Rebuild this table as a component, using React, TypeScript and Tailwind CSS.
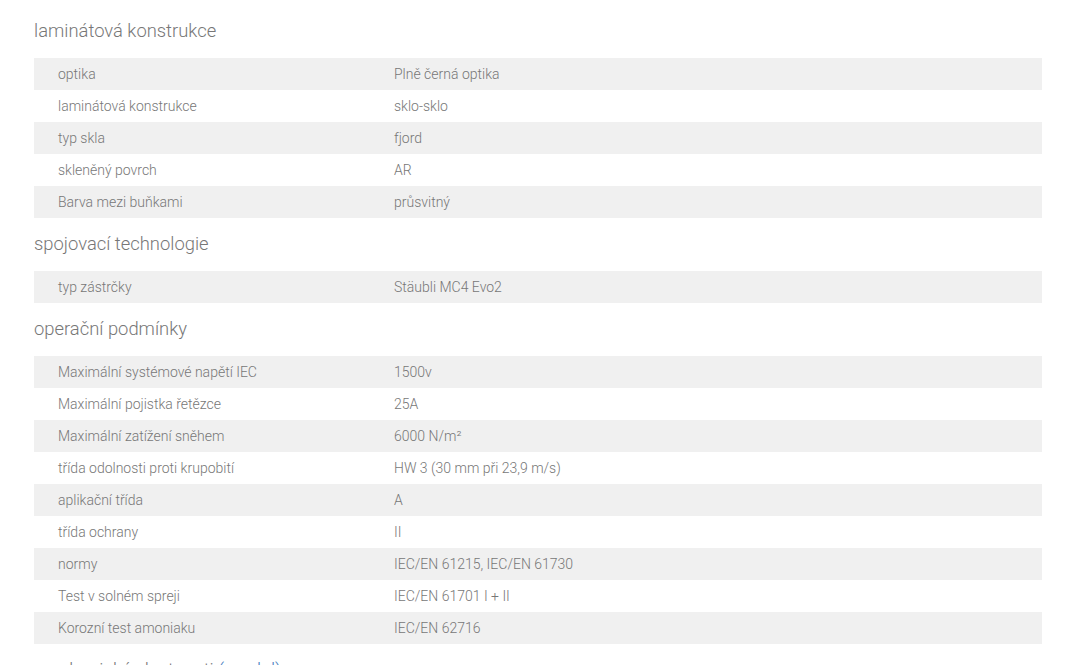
const SECTIONS: { title: string; rows: [string, string][] }[] = [
  {
    title: 'laminátová konstrukce',
    rows: [
      ['optika', 'Plně černá optika'],
      ['laminátová konstrukce', 'sklo-sklo'],
      ['typ skla', 'fjord'],
      ['skleněný povrch', 'AR'],
      ['Barva mezi buňkami', 'průsvitný'],
    ],
  },
  {
    title: 'spojovací technologie',
    rows: [['typ zástrčky', 'Stäubli MC4 Evo2']],
  },
  {
    title: 'operační podmínky',
    rows: [
      ['Maximální systémové napětí IEC', '1500v'],
      ['Maximální pojistka řetězce', '25A'],
      ['Maximální zatížení sněhem', '6000 N/m²'],
      ['třída odolnosti proti krupobití', 'HW 3 (30 mm při 23,9 m/s)'],
      ['aplikační třída', 'A'],
      ['třída ochrany', 'II'],
      ['normy', 'IEC/EN 61215, IEC/EN 61730'],
      ['Test v solném spreji', 'IEC/EN 61701 I + II'],
      ['Korozní test amoniaku', 'IEC/EN 62716'],
    ],
  },
];

export default function App() {
  return (
    <div className="w-[1073px] h-[665px] overflow-hidden bg-white pt-[5px] font-['Roboto',sans-serif] font-light text-[#777]">
      <div className="ml-[34px] w-[1008px]">
        {SECTIONS.map(s => (
          <div key={s.title}>
            <h3 className="h-[53px] leading-[51px] text-[18.4px] text-[#777]">{s.title}</h3>
            <div>
              {s.rows.map(([k, v], i) => (
                <div key={k} className={`flex h-[32px] items-center text-[14px] ${i % 2 === 0 ? 'bg-[#f0f0f0]' : 'bg-white'}`}>
                  <span className="w-[360px] pl-[24px] shrink-0">{k}</span>
                  <span>{v}</span>
                </div>
              ))}
            </div>
          </div>
        ))}
        <h3 className="h-[53px] leading-[51px] text-[18.4px] text-[#777]">
          mechanické vlastnosti <span className="text-[#4a7fc1]">(modul)</span>
        </h3>
      </div>
    </div>
  );
}
